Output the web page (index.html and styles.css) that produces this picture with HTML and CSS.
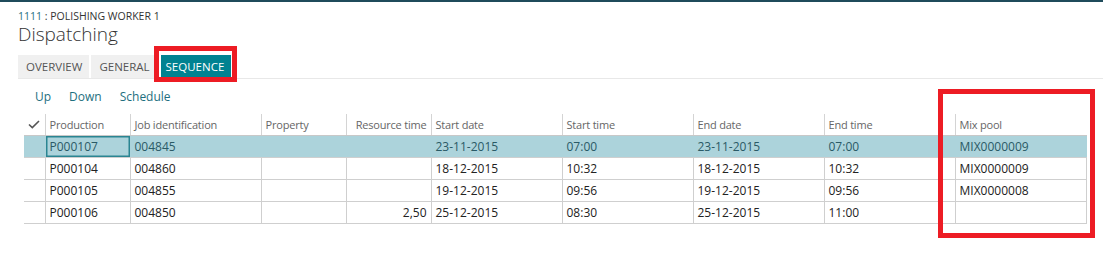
FILE: index.html
```html
<!DOCTYPE html>
<html>
<head>
<meta charset="utf-8">
<link rel="stylesheet" href="styles.css">
</head>
<body>
<div class="topbar"></div>
<div class="page">
  <div class="caption"><span class="link">1111</span> : POLISHING WORKER 1</div>
  <div class="title">Dispatching</div>
  <div class="tabs">
    <div class="tab">OVERVIEW</div>
    <div class="tab">GENERAL</div>
    <div class="tab active">SEQUENCE</div>
  </div>
  <div class="actions">
    <span class="action">Up</span>
    <span class="action">Down</span>
    <span class="action">Schedule</span>
  </div>
  <table class="grid">
    <colgroup>
      <col style="width:21px"><col style="width:85px"><col style="width:131px"><col style="width:85px"><col style="width:85px"><col style="width:131px"><col style="width:131px"><col style="width:131px"><col style="width:131px"><col style="width:131px">
    </colgroup>
    <thead>
      <tr>
        <th class="chk"><svg width="12" height="9" viewBox="0 0 12 9"><path d="M1 4.5 L4.3 7.6 L11 1" fill="none" stroke="#555" stroke-width="1.6"/></svg></th>
        <th>Production</th><th>Job identification</th><th>Property</th><th class="num">Resource time</th><th>Start date</th><th>Start time</th><th>End date</th><th>End time</th><th>Mix pool</th>
      </tr>
    </thead>
    <tbody>
      <tr class="sel">
        <td class="chk"></td><td class="focus">P000107</td><td>004845</td><td></td><td class="num"></td><td>23-11-2015</td><td>07:00</td><td>23-11-2015</td><td>07:00</td><td>MIX0000009</td>
      </tr>
      <tr>
        <td class="chk"></td><td>P000104</td><td>004860</td><td></td><td class="num"></td><td>18-12-2015</td><td>10:32</td><td>18-12-2015</td><td>10:32</td><td>MIX0000009</td>
      </tr>
      <tr>
        <td class="chk"></td><td>P000105</td><td>004855</td><td></td><td class="num"></td><td>19-12-2015</td><td>09:56</td><td>19-12-2015</td><td>09:56</td><td>MIX0000008</td>
      </tr>
      <tr>
        <td class="chk"></td><td>P000106</td><td>004850</td><td></td><td class="num">2,50</td><td>25-12-2015</td><td>08:30</td><td>25-12-2015</td><td>11:00</td><td></td>
      </tr>
    </tbody>
  </table>
</div>
<div class="mark mark-tab"></div>
<div class="mark mark-col"></div>
</body>
</html>
```

FILE: styles.css
```css
html, body {
  margin: 0;
  padding: 0;
  background: #ffffff;
  font-family: "Open Sans", "Noto Sans", sans-serif;
  color: #222;
}
.topbar {
  height: 2px;
  background: #1f4b5b;
}
.page {
  position: relative;
  padding-left: 18px;
}
.caption {
  margin-top: 8px;
  font-size: 10.5px;
  line-height: 13px;
  color: #333;
}
.link { color: #1e6f80; }
.title {
  font-size: 19px;
  line-height: 23px;
  color: #333;
  font-weight: 300;
}
.tabs {
  display: flex;
  gap: 2px;
  margin-top: 9px;
  border-bottom: 1px solid #e8e8e8;
  height: 23px;
}
.tab {
  background: #f0f0f0;
  color: #555;
  font-size: 11.5px;
  line-height: 23px;
  padding: 0 7px 0 8px;
}
.tab.active {
  background: #008291;
  color: #fff;
  margin-left: 2px;
  padding: 0 7px 0 5px;
}
.actions {
  display: flex;
  gap: 18px;
  padding-left: 17px;
  height: 35px;
  align-items: center;
}
.action {
  color: #1e6f80;
  font-size: 12px;
}
.grid {
  margin-left: 6px;
  border-collapse: collapse;
  table-layout: fixed;
  width: 1062px;
  font-size: 12px;
}
.grid th {
  font-weight: normal;
  color: #666;
  text-align: left;
  height: 21px;
  padding: 0 4px;
  font-size: 11px;
  letter-spacing: -0.2px;
  border-left: 1px solid #d4d4d4;
  border-bottom: 1px solid #c8c8c8;
  white-space: nowrap;
}
.grid th.chk {
  border-left: none;
  text-align: center;
  padding: 0;
}
.grid th.num, .grid td.num { text-align: right; }
.grid td {
  height: 21px;
  padding: 0 4px;
  border-left: 1px solid #cfcfcf;
  border-bottom: 1px solid #cfcfcf;
  white-space: nowrap;
}
.grid td:last-child { border-right: 1px solid #cfcfcf; }
.grid td.chk { border-left: none; }
.grid tr.sel td {
  background: #acd3db;
  color: #2a5a66;
  border-left-color: #acd3db;
  border-right-color: #acd3db;
}
.grid tr.sel td.focus {
  box-shadow: inset 0 0 0 1.5px #2a8592;
}
.mark {
  position: absolute;
  border: 5px solid #ed1c24;
  box-sizing: border-box;
}
.mark-tab {
  left: 154px;
  top: 46px;
  width: 83px;
  height: 36px;
}
.mark-col {
  left: 938px;
  top: 89px;
  width: 157px;
  height: 149px;
}
```
